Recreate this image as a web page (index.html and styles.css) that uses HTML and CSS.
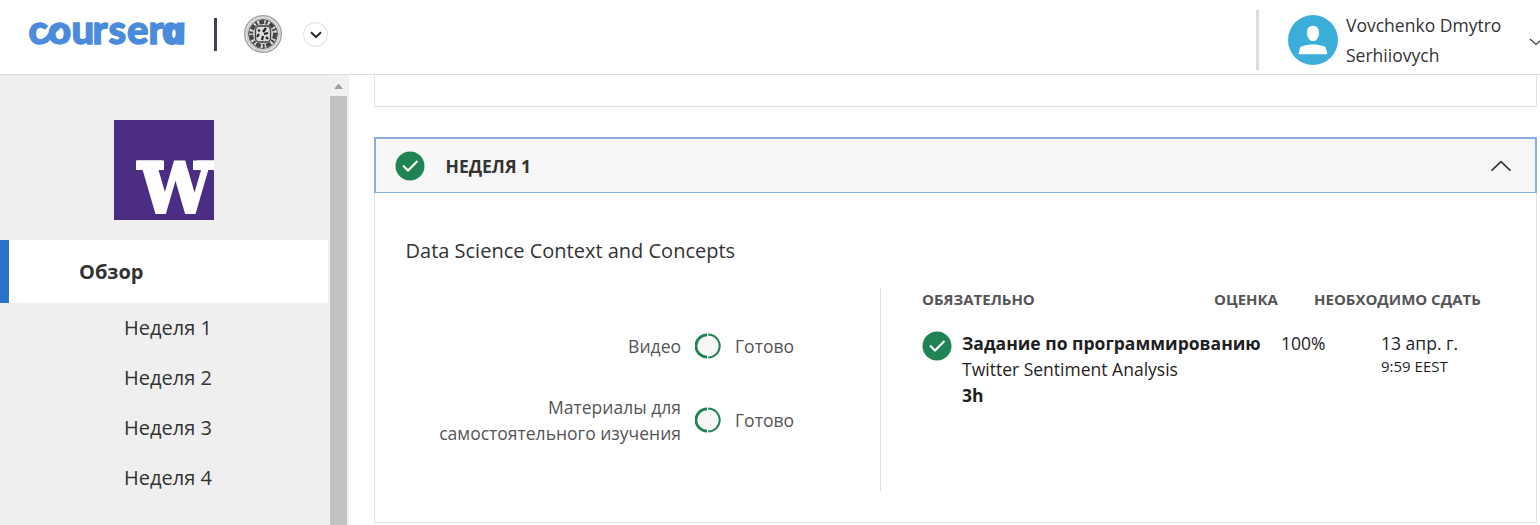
FILE: index.html
```html
<!DOCTYPE html>
<html lang="ru">
<head>
<meta charset="utf-8">
<title>Coursera</title>
<link rel="stylesheet" href="styles.css">
</head>
<body>
<header class="topbar">
  <svg class="logo" width="164" height="44" viewBox="0 0 164 44" role="img" aria-label="coursera">
    <text class="logo-text" x="1.500 21 44.500 65.500 81.500 100 121.500" y="31">courser</text>
    <text class="logo-text logo-last" transform="translate(136.500 31) skewX(12) scale(1.100 1)" x="0" y="0">a</text>
    <path class="logo-link" d="M17.500 28C23.500 25 24.500 17 32 13.800"/>
  </svg>
  <span class="logo-divider"></span>
  <svg class="seal" width="40" height="40" viewBox="0 0 40 40">
    <circle cx="20" cy="20" r="18.300" fill="#eee" stroke="#a5a5a5" stroke-width="1.500"/>
    <circle cx="20" cy="20" r="16" fill="none" stroke="#c8c8c8" stroke-width="1.500"/>
    <circle cx="20" cy="20" r="12" fill="#ccc" stroke="#444" stroke-width="4" stroke-dasharray="5 1.500 2 2"/>
    <circle cx="20" cy="20" r="14.500" fill="none" stroke="#555" stroke-width="1"/>
    <rect x="12.500" y="12" width="15" height="16" rx="4" fill="#ddd" stroke="#444" stroke-width="1.300"/>
    <path d="M15 16l2 1m6-3l-3 4m5 1l-4 1m-5 0l-2 3m6-1l-1 4m4-3l2 2" stroke="#222" stroke-width="2.200" fill="none"/>
  </svg>
  <button class="org-toggle" aria-label="menu">
    <svg width="12" height="8" viewBox="0 0 12 8"><path d="M1 1.200L6 6l5-4.800" fill="none" stroke="#2a2a2a" stroke-width="2"/></svg>
  </button>
  <div class="account">
    <svg class="avatar" width="50" height="50" viewBox="0 0 50 50">
      <circle cx="25" cy="25" r="25" fill="#3baeda"/>
      <path fill="#fff" d="M25 10.800c4 0 6 2.800 6 6.600 0 4.800-2.600 8.700-6 8.700s-6-3.900-6-8.700c0-3.800 2-6.600 6-6.600zM10.700 39.300l1.200-6c.3-1.200.9-1.700 2-2C22 28.800 28 28.800 36 31.300c1.200.4 1.700.9 2 2l1.300 6z"/>
    </svg>
    <span class="user-name">Vovchenko Dmytro<br>Serhiiovych</span>
    <svg class="user-caret" width="14" height="8" viewBox="0 0 14 8"><path d="M1 1l6 5.500L13 1" fill="none" stroke="#444" stroke-width="1.200"/></svg>
  </div>
</header>
<div class="page">
  <aside class="sidebar">
    <nav class="nav">
      <svg class="partner" width="100" height="100" viewBox="0 0 100 100">
        <rect width="100" height="100" fill="#4b2e83"/>
        <text class="partner-letter" transform="translate(25 91.500)" x="0" y="0" textLength="73" lengthAdjust="spacingAndGlyphs">W</text>
        <path fill="#fff" d="M22 40.500h28V50H22zM79 40.500h21V50H79z"/>
      </svg>
      <a class="nav-current">Обзор</a>
      <a class="nav-week">Неделя 1</a>
      <a class="nav-week">Неделя 2</a>
      <a class="nav-week">Неделя 3</a>
      <a class="nav-week">Неделя 4</a>
    </nav>
    <div class="scrollbar"><span class="scroll-up"></span><span class="scroll-thumb"></span></div>
  </aside>
  <main class="content">
    <section class="card-previous"></section>
    <section class="week">
      <div class="week-head">
        <svg class="check" width="30" height="30" viewBox="0 0 30 30"><circle cx="15" cy="15" r="14.500" fill="#208354"/><path d="M8 14.500l5 5L22.500 10" fill="none" stroke="#fff" stroke-width="2"/></svg>
        <h2 class="week-title">НЕДЕЛЯ 1</h2>
        <svg class="collapse" width="22" height="12" viewBox="0 0 22 12"><path d="M1.500 10.700L11 1.700l9.500 9" fill="none" stroke="#333" stroke-width="1.600"/></svg>
      </div>
      <div class="week-body">
        <h3 class="module-title">Data Science Context and Concepts</h3>
        <div class="columns">
          <div class="progress">
            <span class="kind">Видео</span>
            <svg class="ring" width="26" height="26" viewBox="0 0 26 26"><circle cx="12.500" cy="13" r="11" fill="#f7f7f7"/><path d="M12 1.900A11.100 11.100 0 0 0 12 24.100" fill="none" stroke="#208354" stroke-width="2.800"/><path d="M13.200 1.500A11.500 11.500 0 0 1 13.200 24.500" fill="none" stroke="#208354" stroke-width="2"/></svg>
            <span class="state">Готово</span>
            <span class="kind">Материалы для<br>самостоятельного изучения</span>
            <svg class="ring" width="26" height="26" viewBox="0 0 26 26"><circle cx="12.500" cy="13" r="11" fill="#f7f7f7"/><path d="M12 1.900A11.100 11.100 0 0 0 12 24.100" fill="none" stroke="#208354" stroke-width="2.800"/><path d="M13.200 1.500A11.500 11.500 0 0 1 13.200 24.500" fill="none" stroke="#208354" stroke-width="2"/></svg>
            <span class="state">Готово</span>
          </div>
          <div class="required">
            <div class="required-head"><span>ОБЯЗАТЕЛЬНО</span><span>ОЦЕНКА</span><span>НЕОБХОДИМО СДАТЬ</span></div>
            <div class="task">
              <svg class="check" width="30" height="30" viewBox="0 0 30 30"><circle cx="15" cy="15" r="14.500" fill="#208354"/><path d="M8 14.500l5 5L22.500 10" fill="none" stroke="#fff" stroke-width="2"/></svg>
              <div class="task-info"><b>Задание по программированию</b><span>Twitter Sentiment Analysis</span><b>3h</b></div>
              <span class="grade">100%</span>
              <div class="due"><span>13 апр. г.</span><small>9:59 EEST</small></div>
            </div>
          </div>
        </div>
      </div>
    </section>
  </main>
</div>
</body>
</html>
```
FILE: styles.css
```css
* { box-sizing: border-box; }
body { margin: 0; height: 525px; overflow: hidden; background: #fff; color: #333; font: 17.530px/26px "Open Sans", sans-serif; display: flex; flex-direction: column; }
svg { display: block; flex: none; }
.topbar { height: 75px; flex: none; display: flex; border-bottom: 1px solid #ddd; padding-left: 27px; }
.logo { margin-top: 13px; overflow: visible; }
.logo-text { font: 900 40px Lato, sans-serif; fill: #4a8bdc; stroke: #4a8bdc; stroke-width: 1.3; }
.logo-last { font: italic 800 37.500px "Open Sans", sans-serif; }
.logo-link { fill: none; stroke: #4a8bdc; stroke-width: 5.5; }
.logo-divider { width: 3px; height: 33px; margin: 18px 27px 0 23px; background: #3b4350; }
.seal { margin-top: 14px; margin-left: -1px; }
.org-toggle { width: 25px; height: 25px; margin: 22px 0 0 20px; padding: 0; border: 1px solid #ddd; border-radius: 50%; background: #fff; display: grid; place-items: center; }
.account { margin: 10px 0 0 auto; width: 284px; height: 60px; flex: none; border-left: 3px solid #ddd; display: flex; padding-left: 29px; }
.avatar { margin-top: 5px; }
.user-name { margin-left: 8px; width: 183px; line-height: 30px; white-space: nowrap; }
.user-caret { margin-top: 28px; margin-right: -5px; }
.page { display: flex; flex: 1; min-height: 0; }
.sidebar { width: 349px; flex: none; display: flex; background: #efefef; }
.nav { width: 330px; display: flex; flex-direction: column; padding-top: 45px; font-size: 20px; }
.partner { margin: 0 0 20px 114px; }
.partner-letter { font: bold 69px "DejaVu Serif", serif; fill: #fff; stroke: #fff; stroke-width: 3; }
.nav-current { width: 328px; height: 63px; padding-left: 70px; border-left: 9px solid #2a73cc; background: #fff; font-weight: 700; line-height: 63px; }
.nav-week { height: 50px; padding-left: 124px; line-height: 50px; }
.scrollbar { width: 17px; display: flex; flex-direction: column; background: #f1f1f1; }
.scroll-up { margin: 9px 4px 7px; border: solid transparent; border-width: 0 4.500px 5px; border-bottom-color: #a0a0a0; }
.scroll-thumb { flex: 1; background: #c1c1c1; }
.content { width: 1163px; margin-left: 25px; }
.card-previous { height: 32px; border: 1px solid #e1e1e1; border-top: 0; }
.week { margin-top: 30px; height: 386px; border: 1px solid #e1e1e1; border-top: 0; }
.week-head { height: 56px; margin: 0 -1px; padding: 0 23px 0 19px; display: flex; align-items: center; background: #f7f7f7; border: 2px solid #8aaee0; border-bottom-width: 1px; }
.week-title { margin: 1px auto 0 20.500px; font-size: 17.500px; line-height: 26px; }
.week-body { padding: 45px 31px 0 30px; }
.module-title { margin: 0 0 0 0.500px; font-size: 20px; font-weight: 400; line-height: 26px; }
.columns { margin-top: 24px; display: flex; }
.progress { width: 476px; height: 203px; border-right: 1px solid #ddd; display: grid; grid-template-columns: 276px 26px 1fr; grid-template-rows: 26px 52px; row-gap: 35px; column-gap: 14px; align-items: center; padding-top: 45px; align-content: start; color: #555; }
.kind { text-align: right; margin-left: -20px; white-space: nowrap; }
.required { padding-left: 41px; color: #1f1f1f; }
.required-head { display: grid; grid-template-columns: 292px 100px 180px; color: #555; font-size: 15px; font-weight: 700; line-height: 22px; white-space: nowrap; }
.task { display: flex; margin-top: 20px; white-space: nowrap; }
.task .check { margin-top: 1px; }
.task-info { display: flex; flex-direction: column; width: 319px; margin-left: 10px; }
.grade { width: 100px; }
.due { display: flex; flex-direction: column; }
.due small { font-size: 15px; line-height: 21px; }
```
